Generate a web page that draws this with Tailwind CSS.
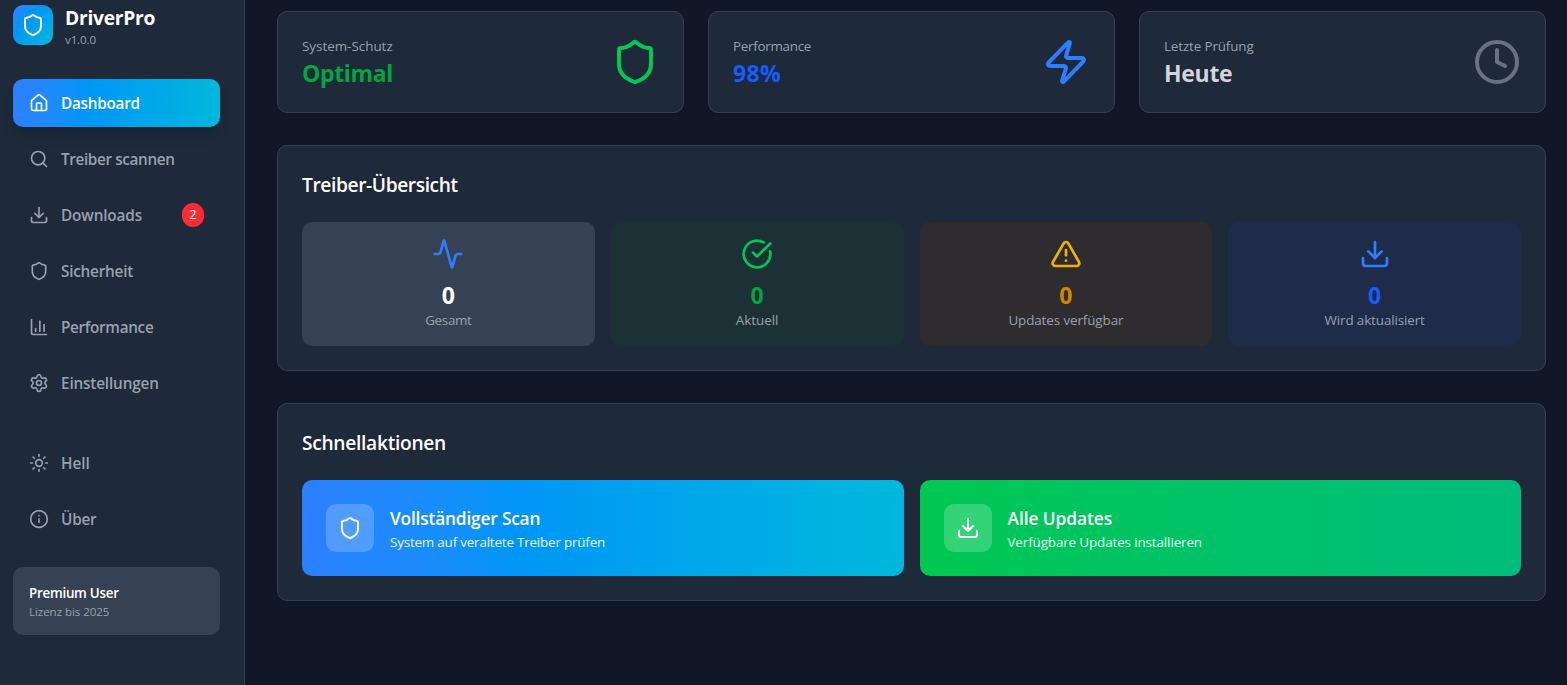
<!DOCTYPE html>
<html lang="de">
<head>
<meta charset="utf-8">
<title>DriverPro</title>
<script src="https://cdn.jsdelivr.net/npm/@tailwindcss/browser@4"></script>
</head>
<body class="bg-gray-900 font-['Segoe_UI','Open_Sans',sans-serif] text-white">
<svg class="hidden">
  <symbol id="shield" viewBox="0 0 24 24"><path d="M20 13c0 5-3.5 7.5-7.66 8.95a1 1 0 0 1-.67-.01C7.5 20.5 4 18 4 13V6a1 1 0 0 1 1-1c2 0 4.5-1.2 6.24-2.72a1.17 1.17 0 0 1 1.52 0C14.51 3.81 17 5 19 5a1 1 0 0 1 1 1z"/></symbol>
  <symbol id="house" viewBox="0 0 24 24"><path d="M15 21v-8a1 1 0 0 0-1-1h-4a1 1 0 0 0-1 1v8"/><path d="M3 10a2 2 0 0 1 .709-1.528l7-5.999a2 2 0 0 1 2.582 0l7 5.999A2 2 0 0 1 21 10v9a2 2 0 0 1-2 2H5a2 2 0 0 1-2-2z"/></symbol>
  <symbol id="search" viewBox="0 0 24 24"><path d="m21 21-4.34-4.34"/><circle cx="11" cy="11" r="8"/></symbol>
  <symbol id="download" viewBox="0 0 24 24"><path d="M12 15V3"/><path d="M21 15v4a2 2 0 0 1-2 2H5a2 2 0 0 1-2-2v-4"/><path d="m7 10 5 5 5-5"/></symbol>
  <symbol id="chart" viewBox="0 0 24 24"><path d="M3 3v16a2 2 0 0 0 2 2h16"/><path d="M18 17V9"/><path d="M13 17V5"/><path d="M8 17v-3"/></symbol>
  <symbol id="settings" viewBox="0 0 24 24"><path d="M9.671 4.136a2.34 2.34 0 0 1 4.659 0 2.34 2.34 0 0 0 3.319 1.915 2.34 2.34 0 0 1 2.33 4.033 2.34 2.34 0 0 0 0 3.831 2.34 2.34 0 0 1-2.33 4.033 2.34 2.34 0 0 0-3.319 1.915 2.34 2.34 0 0 1-4.659 0 2.34 2.34 0 0 0-3.32-1.915 2.34 2.34 0 0 1-2.33-4.033 2.34 2.34 0 0 0 0-3.831A2.34 2.34 0 0 1 6.35 6.051a2.34 2.34 0 0 0 3.319-1.915"/><circle cx="12" cy="12" r="3"/></symbol>
  <symbol id="sun" viewBox="0 0 24 24"><circle cx="12" cy="12" r="4"/><path d="M12 2v2"/><path d="M12 20v2"/><path d="m4.93 4.93 1.41 1.41"/><path d="m17.66 17.66 1.41 1.41"/><path d="M2 12h2"/><path d="M20 12h2"/><path d="m6.34 17.66-1.41 1.41"/><path d="m19.07 4.93-1.41 1.41"/></symbol>
  <symbol id="info" viewBox="0 0 24 24"><circle cx="12" cy="12" r="10"/><path d="M12 16v-4"/><path d="M12 8h.01"/></symbol>
  <symbol id="zap" viewBox="0 0 24 24"><path d="M4 14a1 1 0 0 1-.78-1.63l9.9-10.2a.5.5 0 0 1 .86.46l-1.92 6.02A1 1 0 0 0 13 10h7a1 1 0 0 1 .78 1.63l-9.9 10.2a.5.5 0 0 1-.86-.46l1.92-6.02A1 1 0 0 0 11 14z"/></symbol>
  <symbol id="clock" viewBox="0 0 24 24"><circle cx="12" cy="12" r="10"/><path d="M12 6v6l4 2"/></symbol>
  <symbol id="activity" viewBox="0 0 24 24"><path d="M22 12h-2.48a2 2 0 0 0-1.93 1.46l-2.35 8.36a.25.25 0 0 1-.48 0L9.24 2.18a.25.25 0 0 0-.48 0l-2.35 8.36A2 2 0 0 1 4.49 12H2"/></symbol>
  <symbol id="check" viewBox="0 0 24 24"><path d="M21.801 10A10 10 0 1 1 17 3.335"/><path d="m9 11 3 3L22 4"/></symbol>
  <symbol id="warning" viewBox="0 0 24 24"><path d="m21.73 18-8-14a2 2 0 0 0-3.48 0l-8 14A2 2 0 0 0 4 21h16a2 2 0 0 0 1.73-3"/><path d="M12 9v4"/><path d="M12 17h.01"/></symbol>
</svg>

<div class="flex h-screen overflow-hidden fill-none stroke-2 [stroke-linecap:round] [stroke-linejoin:round]">
  <aside class="w-[245px] shrink-0 border-r border-gray-700 bg-gray-800 pt-[3px] pr-6 pl-[13px]">
    <div class="mb-8 flex items-center gap-3">
      <div class="flex size-10 items-center justify-center rounded-[10px] bg-gradient-to-br from-blue-500 to-cyan-500"><svg class="size-6 stroke-white"><use href="#shield"/></svg></div>
      <div>
        <h1 class="pt-0.5 text-[19.2px]/[26px] font-bold tracking-[-0.25px]">DriverPro</h1>
        <p class="pt-0.5 text-[11.6px]/[14px] tracking-[-0.15px] text-gray-400">v1.0.0</p>
      </div>
    </div>

    <nav class="flex flex-col gap-2 text-[15.3px]/[24px] font-semibold text-gray-400">
      <a class="flex h-12 items-center gap-3 rounded-[10px] bg-gradient-to-r from-blue-500 to-cyan-500 px-4 text-white shadow-lg"><svg class="size-5 stroke-current"><use href="#house"/></svg><span class="tracking-[-0.26px]">Dashboard</span></a>
      <a class="flex h-12 items-center gap-3 px-4"><svg class="size-5 stroke-current"><use href="#search"/></svg><span class="tracking-[-0.37px]">Treiber scannen</span></a>
      <a class="flex h-12 items-center gap-3 px-4"><svg class="size-5 stroke-current"><use href="#download"/></svg><span class="tracking-[-0.13px]">Downloads</span><span class="ml-auto rounded-full bg-[#fb2c36] px-[7.7px] py-1 text-[12px]/[16px] font-normal text-white">2</span></a>
      <a class="flex h-12 items-center gap-3 px-4"><svg class="size-5 stroke-current"><use href="#shield"/></svg><span class="tracking-[-0.22px]">Sicherheit</span></a>
      <a class="flex h-12 items-center gap-3 px-4"><svg class="size-5 stroke-current"><use href="#chart"/></svg><span class="tracking-[-0.32px]">Performance</span></a>
      <a class="flex h-12 items-center gap-3 px-4"><svg class="size-5 stroke-current"><use href="#settings"/></svg><span class="tracking-[-0.16px]">Einstellungen</span></a>
    </nav>

    <div class="mt-8 flex flex-col gap-2 text-[15.3px]/[24px] font-semibold text-gray-400">
      <a class="flex h-12 items-center gap-3 px-4"><svg class="size-5 stroke-current"><use href="#sun"/></svg><span>Hell</span></a>
      <a class="flex h-12 items-center gap-3 px-4"><svg class="size-5 stroke-current"><use href="#info"/></svg><span class="tracking-[-0.2px]">Über</span></a>
    </div>

    <div class="mt-6 rounded-[10px] bg-gray-700 p-4">
      <p class="text-[13.4px]/[20px] font-semibold tracking-[-0.27px]">Premium User</p>
      <p class="pt-0.5 text-[11.6px]/[14px] tracking-[-0.08px] text-gray-400">Lizenz bis 2025</p>
    </div>
  </aside>

  <main class="flex min-w-0 flex-1 flex-col gap-8 pt-[11px] pr-[21px] pl-8">
    <div class="grid grid-cols-3 gap-6">
      <div class="flex items-center justify-between rounded-[10px] border border-gray-700 bg-gray-800 p-6 shadow-sm">
        <div>
          <p class="text-[13.4px]/[20px] text-gray-400">System-Schutz</p>
          <p class="pt-0.5 text-[23px]/[30px] font-bold tracking-[-0.36px] text-green-600">Optimal</p>
        </div>
        <svg class="size-12 stroke-green-500"><use href="#shield"/></svg>
      </div>
      <div class="flex items-center justify-between rounded-[10px] border border-gray-700 bg-gray-800 p-6 shadow-sm">
        <div>
          <p class="text-[13.4px]/[20px] tracking-[-0.27px] text-gray-400">Performance</p>
          <p class="pt-0.5 text-[23px]/[30px] font-bold tracking-[0.3px] text-blue-600">98%</p>
        </div>
        <svg class="size-12 stroke-blue-500"><use href="#zap"/></svg>
      </div>
      <div class="flex items-center justify-between rounded-[10px] border border-gray-700 bg-gray-800 p-6 shadow-sm">
        <div>
          <p class="text-[13.4px]/[20px] tracking-[-0.12px] text-gray-400">Letzte Prüfung</p>
          <p class="pt-0.5 text-[23px]/[30px] font-bold tracking-[-0.3px] text-gray-300">Heute</p>
        </div>
        <svg class="size-12 stroke-gray-500"><use href="#clock"/></svg>
      </div>
    </div>

    <section class="rounded-[10px] border border-gray-700 bg-gray-800 p-6 shadow-sm">
      <h2 class="mb-6 pt-0.5 text-[19.2px]/[26px] font-semibold tracking-[-0.4px]">Treiber-Übersicht</h2>
      <div class="grid grid-cols-4 gap-4 text-center">
        <div class="rounded-[10px] bg-gray-700 p-4">
          <svg class="mx-auto mb-2 size-8 stroke-blue-500"><use href="#activity"/></svg>
          <p class="pt-0.5 text-[23px]/[30px] font-bold">0</p>
          <p class="text-[13.4px]/[20px] tracking-[-0.3px] text-gray-400">Gesamt</p>
        </div>
        <div class="rounded-[10px] bg-green-900/20 p-4">
          <svg class="mx-auto mb-2 size-8 stroke-green-500"><use href="#check"/></svg>
          <p class="pt-0.5 text-[23px]/[30px] font-bold text-green-600">0</p>
          <p class="text-[13.4px]/[20px] text-gray-400">Aktuell</p>
        </div>
        <div class="rounded-[10px] bg-yellow-900/20 p-4">
          <svg class="mx-auto mb-2 size-8 stroke-yellow-500"><use href="#warning"/></svg>
          <p class="pt-0.5 text-[23px]/[30px] font-bold text-yellow-600">0</p>
          <p class="text-[13.4px]/[20px] tracking-[-0.09px] text-gray-400">Updates verfügbar</p>
        </div>
        <div class="rounded-[10px] bg-blue-900/20 p-4">
          <svg class="mx-auto mb-2 size-8 stroke-blue-500"><use href="#download"/></svg>
          <p class="pt-0.5 text-[23px]/[30px] font-bold text-blue-600">0</p>
          <p class="text-[13.4px]/[20px] tracking-[-0.11px] text-gray-400">Wird aktualisiert</p>
        </div>
      </div>
    </section>

    <section class="rounded-[10px] border border-gray-700 bg-gray-800 p-6 shadow-sm">
      <h2 class="mb-6 pt-0.5 text-[19.2px]/[26px] font-semibold tracking-[-0.3px]">Schnellaktionen</h2>
      <div class="grid grid-cols-2 gap-4">
        <div class="flex items-center gap-4 rounded-[10px] bg-gradient-to-r from-blue-500 to-cyan-500 p-6">
          <div class="flex size-12 items-center justify-center rounded-[10px] bg-white/20"><svg class="size-6 stroke-white"><use href="#shield"/></svg></div>
          <div>
            <h3 class="pt-0.5 text-[17.3px]/[26px] font-semibold tracking-[-0.17px]">Vollständiger Scan</h3>
            <p class="text-[13.4px]/[20px] tracking-[-0.18px] text-white/90">System auf veraltete Treiber prüfen</p>
          </div>
        </div>
        <div class="flex items-center gap-4 rounded-[10px] bg-gradient-to-r from-green-500 to-emerald-500 p-6">
          <div class="flex size-12 items-center justify-center rounded-[10px] bg-white/20"><svg class="size-6 stroke-white"><use href="#download"/></svg></div>
          <div>
            <h3 class="pt-0.5 text-[17.3px]/[26px] font-semibold tracking-[-0.05px]">Alle Updates</h3>
            <p class="text-[13.4px]/[20px] tracking-[-0.11px] text-white/90">Verfügbare Updates installieren</p>
          </div>
        </div>
      </div>
    </section>
  </main>
</div>
</body>
</html>
